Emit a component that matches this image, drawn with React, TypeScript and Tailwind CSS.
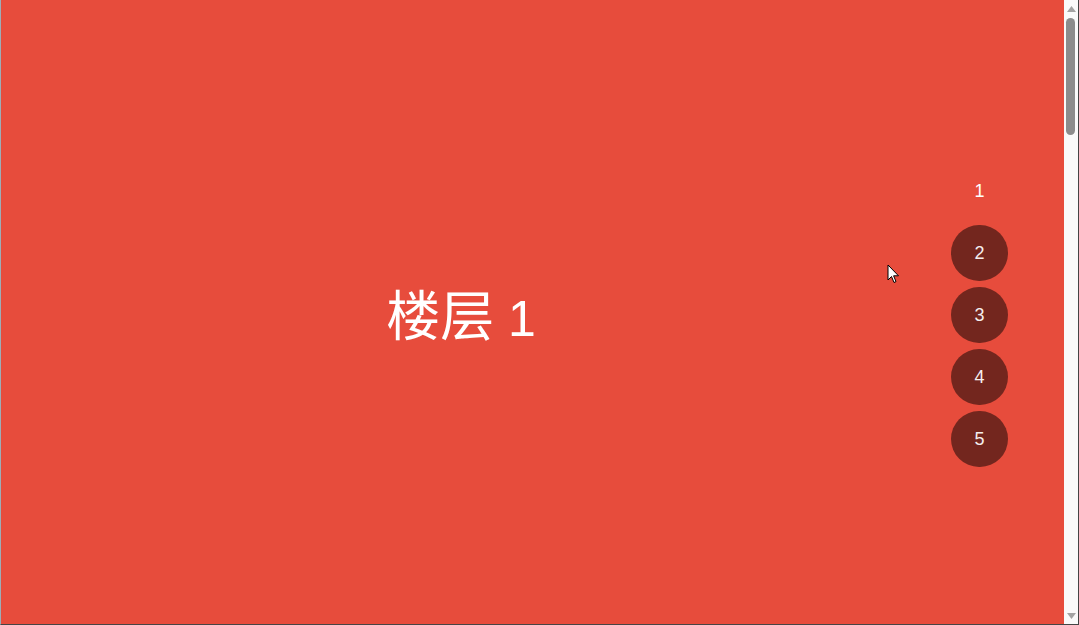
import { useState } from "react";

const floors = [1, 2, 3, 4, 5];

function ScrollArrow({ up }: { up?: boolean }) {
  return (
    <div className="flex h-[17px] items-center justify-center">
      <svg width="9" height="6" viewBox="0 0 9 6">
        <path d={up ? "M4.5 0 L9 6 L0 6 Z" : "M0 0 L9 0 L4.5 6 Z"} fill="#a3a3a3" />
      </svg>
    </div>
  );
}

export default function App() {
  const [active] = useState(1);

  return (
    <div
      className="relative flex h-[625px] w-full border-l border-r border-b border-l-[#9eacb6] border-r-[#454545] border-b-[#454545]"
      style={{ fontFamily: '"Liberation Sans", "Noto Sans CJK SC", sans-serif' }}
    >
      {/* Current floor */}
      <section className="flex flex-1 items-center justify-center bg-[#e74c3c] pr-[143px] pt-[10px]">
        <h2 className="flex items-baseline text-[50px] leading-none text-white">
          <span className="text-[54px]">楼层</span>
          <span>&nbsp;{active}</span>
        </h2>
      </section>

      {/* Page scrollbar */}
      <div className="flex w-[14px] flex-col bg-[#fafafa]">
        <ScrollArrow up />
        <div className="flex-1 pl-[2px] pr-[3px]">
          <div className="mt-[1px] h-[117px] rounded-full bg-[#8c8c8c]" />
        </div>
        <ScrollArrow />
      </div>

      {/* Floor navigation */}
      <nav className="absolute right-[70px] top-[163px] flex flex-col gap-[6px]">
        {floors.map((n) => (
          <button
            key={n}
            className={`flex h-[56px] w-[57px] items-center justify-center rounded-full text-[18px] ${
              n === active ? "bg-transparent text-white" : "bg-[#73261e] text-[#f5eeee]"
            }`}
          >
            {n}
          </button>
        ))}
      </nav>

      {/* Mouse pointer */}
      <svg
        className="pointer-events-none absolute left-[886px] top-[264px]"
        width="13"
        height="20"
        viewBox="0 0 13 20"
      >
        <path
          d="M1 1 L1 16 L4.5 12.5 L7 18.5 L9 17.6 L6.6 11.8 L11.5 11.8 Z"
          fill="#fff"
          stroke="#000"
          strokeWidth="1"
          strokeLinejoin="round"
        />
      </svg>
    </div>
  );
}
